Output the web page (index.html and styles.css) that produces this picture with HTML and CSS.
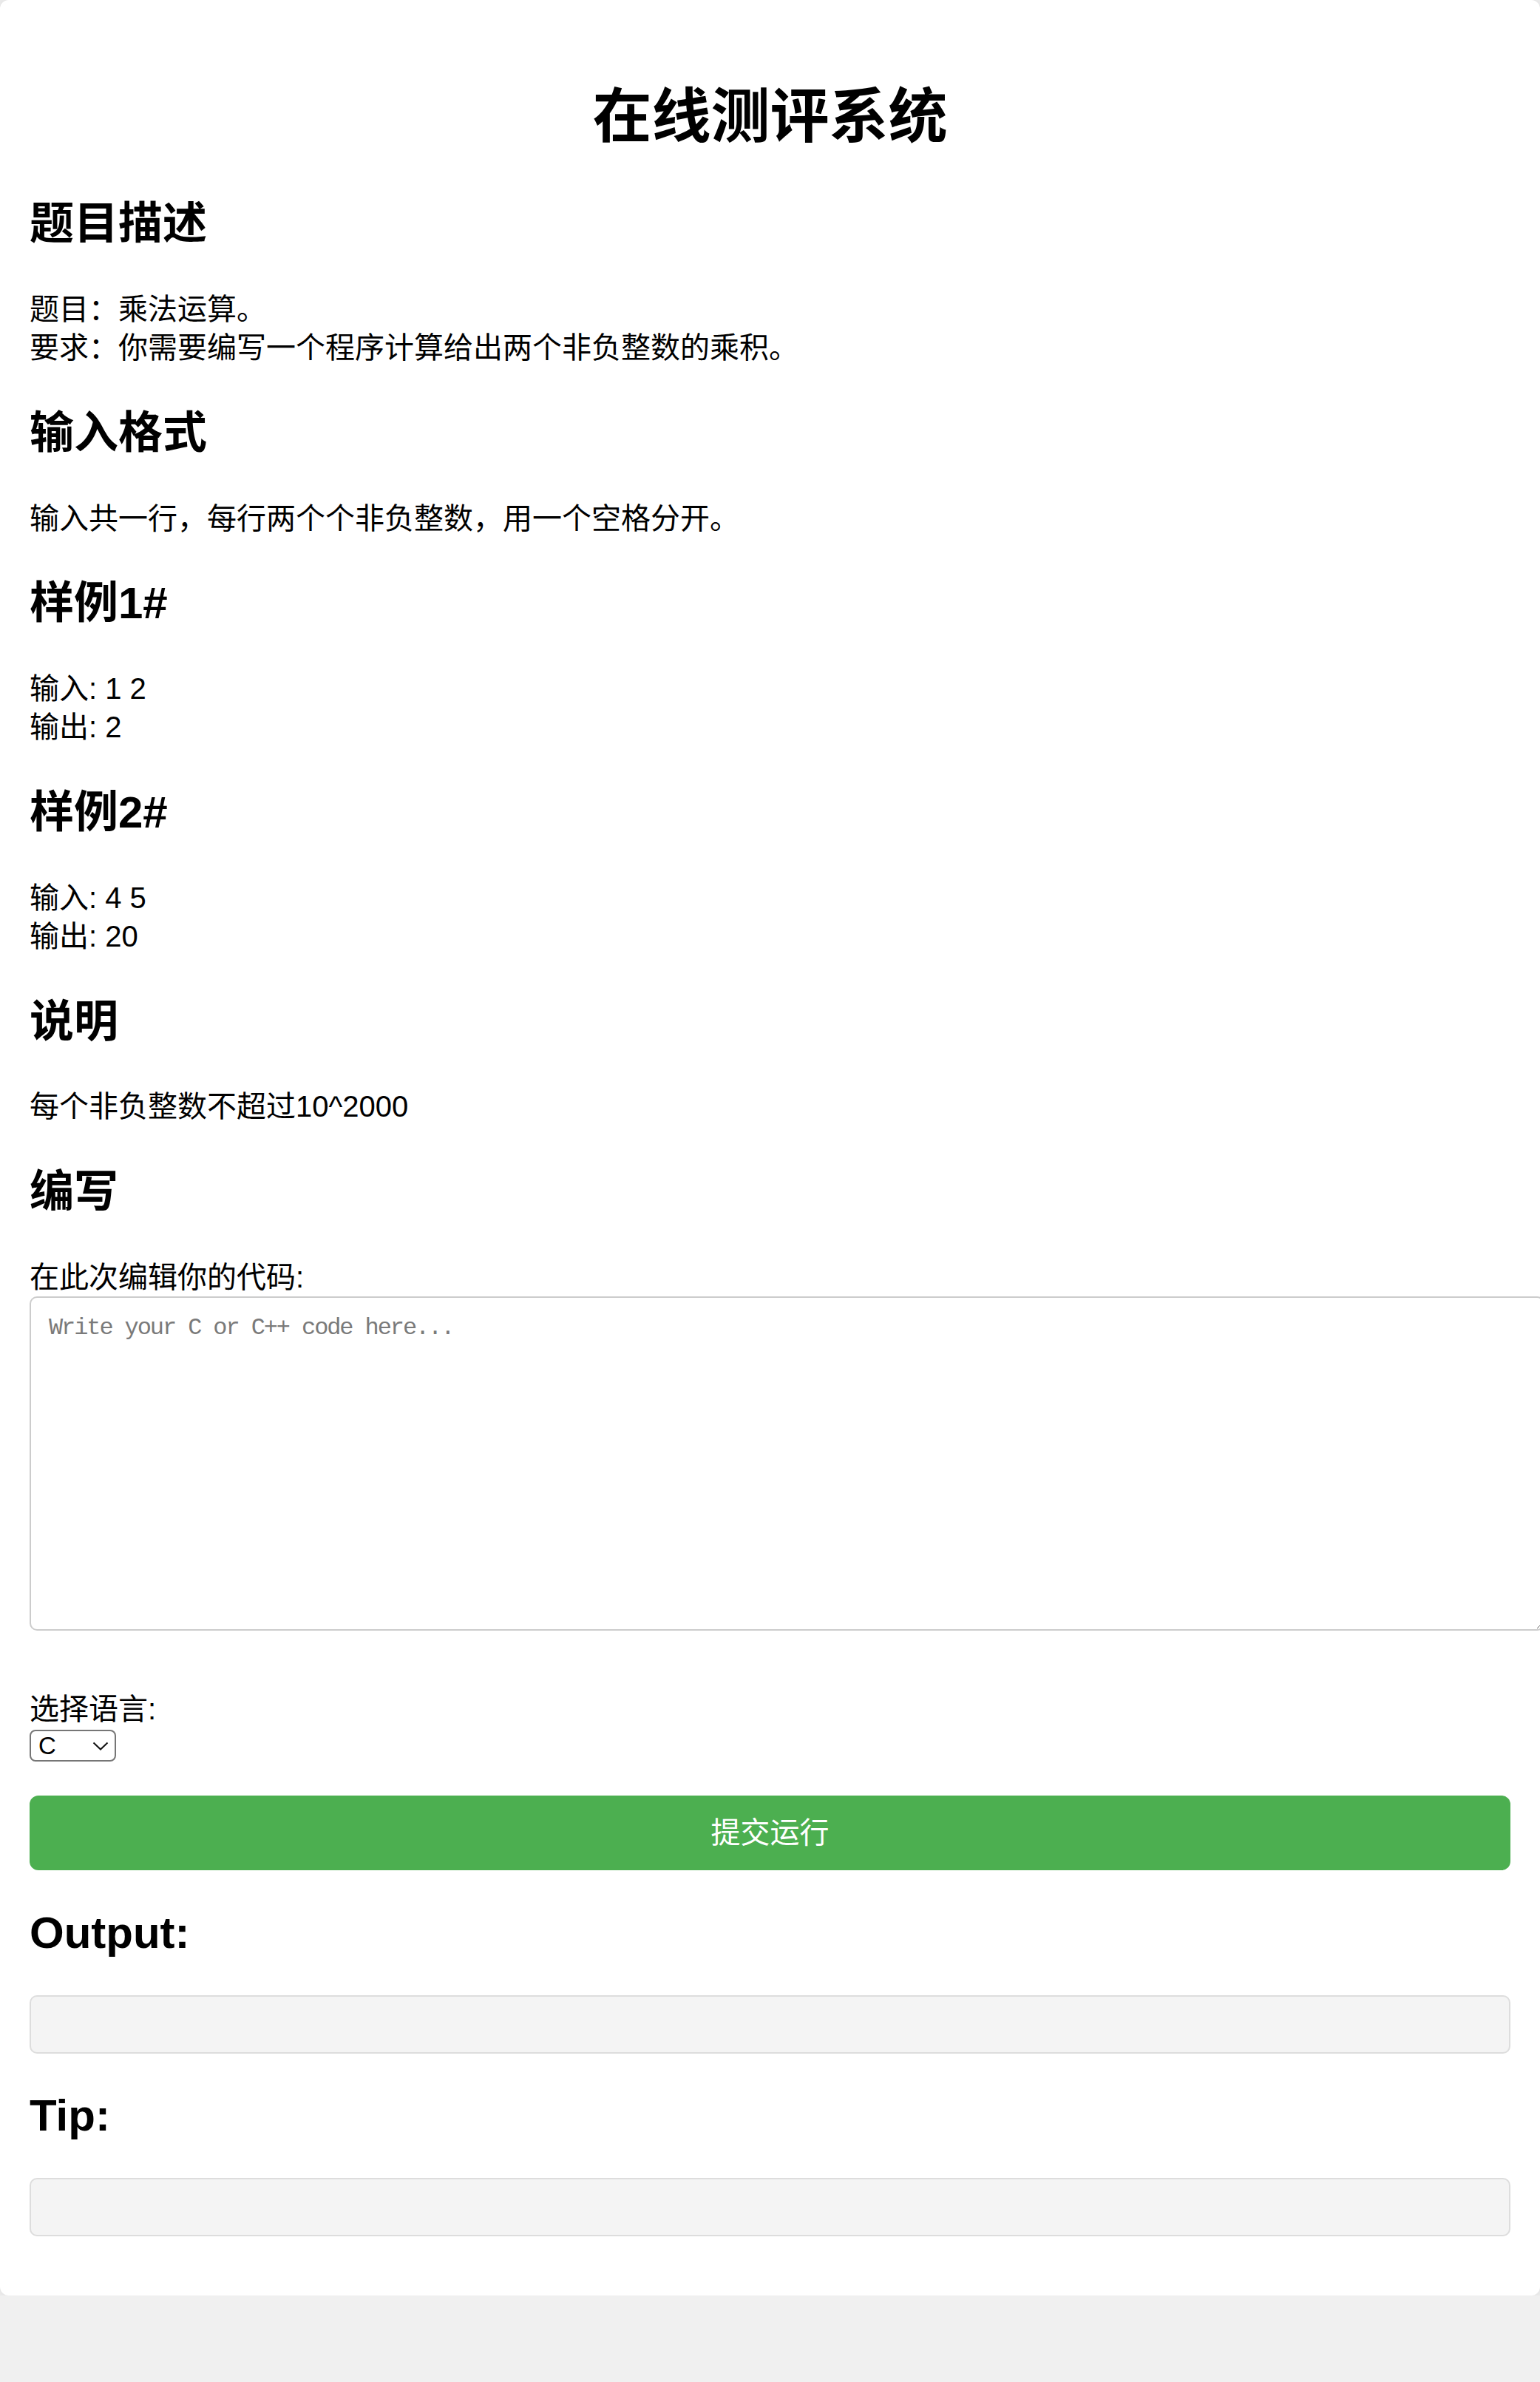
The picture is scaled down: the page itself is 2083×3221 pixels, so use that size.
FILE: index.html
```html
<!DOCTYPE html>
<html lang="zh-CN">
<head>
<meta charset="utf-8">
<title>在线测评系统</title>
<link rel="stylesheet" href="styles.css">
</head>
<body class="page">
<div class="container">
  <h1 class="title">在线测评系统</h1>

  <h2 class="section-title">题目描述</h2>
  <p class="text">题目：乘法运算。<br>要求：你需要编写一个程序计算给出两个非负整数的乘积。</p>

  <h2 class="section-title">输入格式</h2>
  <p class="text">输入共一行，每行两个个非负整数，用一个空格分开。</p>

  <h2 class="section-title">样例1#</h2>
  <p class="text">输入: 1 2<br>输出: 2</p>

  <h2 class="section-title">样例2#</h2>
  <p class="text">输入: 4 5<br>输出: 20</p>

  <h2 class="section-title">说明</h2>
  <p class="text">每个非负整数不超过10^2000</p>

  <h2 class="section-title">编写</h2>
  <label class="field-label" for="code">在此次编辑你的代码:</label>
  <textarea id="code" class="code-input" placeholder="Write your C or C++ code here..."></textarea>

  <label class="field-label" for="lang">选择语言:</label>
  <div class="select-wrap">
    <select id="lang" class="lang-select">
      <option>C</option>
      <option>C++</option>
    </select>
    <svg class="chevron" width="22" height="12" viewBox="0 0 22 12" aria-hidden="true">
      <polyline points="1.5,1.5 11,10.5 20.5,1.5" fill="none" stroke="#111" stroke-width="2"/>
    </svg>
  </div>

  <button class="submit" type="button">提交运行</button>

  <h2 class="section-title latin">Output:</h2>
  <div class="result-box"></div>

  <h2 class="section-title latin">Tip:</h2>
  <div class="result-box"></div>
</div>
</body>
</html>
```

FILE: styles.css
```css
html, body {
  overflow-x: hidden;
}

.page {
  margin: 0;
  background: #f0f0f0;
  font-family: "Liberation Sans", Arial, "Noto Sans CJK SC", sans-serif;
  color: #000;
}

.container {
  background: #fff;
  padding: 52px 40px 80px;
  border-radius: 12px;
  box-shadow: 0 0 25px rgba(0, 0, 0, 0.1);
}

.title {
  font-size: 80px;
  line-height: 104px;
  font-weight: 700;
  text-align: center;
  margin: 53.6px 0;
}

.section-title {
  font-size: 60px;
  line-height: 79px;
  font-weight: 700;
  margin: 49.8px 0;
}

.section-title.latin {
  line-height: 69px;
}

.text {
  font-size: 40px;
  line-height: 52px;
  margin: 40px 0;
}

.field-label {
  display: block;
  font-size: 40px;
  line-height: 52px;
}

.code-input {
  display: block;
  box-sizing: border-box;
  width: calc(100% + 46px);
  height: 452px;
  margin: 0 0 80px;
  padding: 22px 24px;
  border: 2.5px solid #ccc;
  border-radius: 10px;
  font-family: "Liberation Mono", monospace;
  font-size: 32px;
  letter-spacing: -2.1px;
  background: #fff;
}

.code-input::placeholder {
  color: #7a7a7a;
}

.select-wrap {
  position: relative;
  width: 117px;
  height: 43px;
  margin-top: 2px;
}

.lang-select {
  appearance: none;
  -webkit-appearance: none;
  box-sizing: border-box;
  width: 117px;
  height: 43px;
  margin: 0;
  padding: 0 0 0 10px;
  border: 2px solid #767676;
  border-radius: 8px;
  background: #fff;
  font-family: "Liberation Sans", Arial, sans-serif;
  font-size: 33px;
  color: #000;
}

.chevron {
  position: absolute;
  left: 85px;
  top: 16px;
  pointer-events: none;
}

.submit {
  display: block;
  box-sizing: border-box;
  width: 100%;
  height: 101px;
  margin: 46px 0 0;
  padding: 0;
  border: none;
  border-radius: 12px;
  background: #4caf50;
  color: #fff;
  font-family: "Liberation Sans", Arial, "Noto Sans CJK SC", sans-serif;
  font-size: 40px;
  line-height: 52px;
  cursor: pointer;
}

.result-box {
  box-sizing: border-box;
  height: 79px;
  background: #f4f4f4;
  border: 2.5px solid #ddd;
  border-radius: 10px;
}
```
